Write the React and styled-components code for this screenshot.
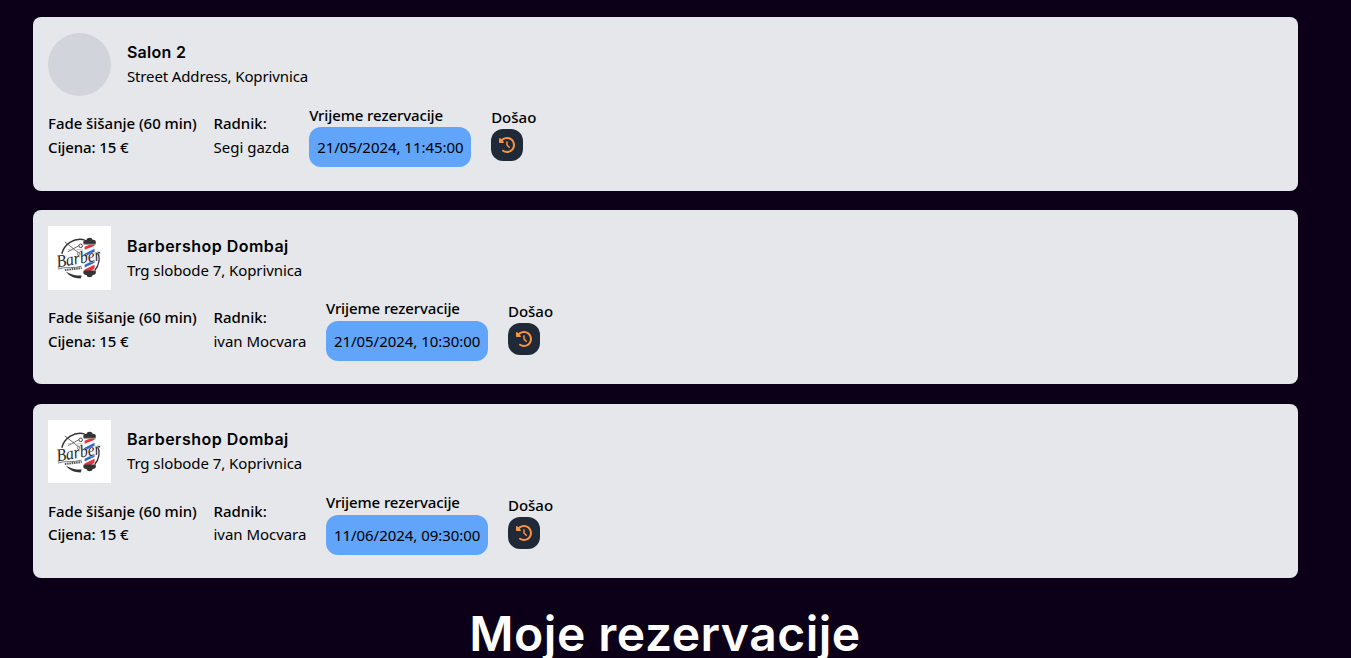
import React from 'react';
import styled, { createGlobalStyle } from 'styled-components';
import { FaClockRotateLeft } from 'react-icons/fa6';

const GlobalStyle = createGlobalStyle`
  *, *::before, *::after { box-sizing: border-box; }
  body {
    margin: 0;
    background: #0c0019;
    color: #000;
    font-family: 'Noto Sans', 'Open Sans', sans-serif;
    font-size: 15px;
    line-height: 23.8px;
  }
`;

const Page = styled.main`
  height: 100vh;
  overflow: hidden;
  padding: 16.5px 53.5px 0 32.5px;
`;

const List = styled.section`
  display: flex;
  flex-direction: column;
  gap: 19.8px;
`;

const Card = styled.article`
  height: 174px;
  padding: 16px 15.5px;
  border-radius: 8px;
  background: #e5e7eb;
`;

const CardHeader = styled.header`
  display: flex;
  align-items: center;
  gap: 15.5px;
  height: 63.4px;
`;

const EmptyAvatar = styled.div`
  width: 63.4px;
  height: 63.4px;
  border-radius: 50%;
  background: #d1d5db;
`;

const LogoFrame = styled.svg`
  display: block;
  width: 63.4px;
  height: 63.4px;
  background: #fff;
`;

const SalonInfo = styled.div`
  display: flex;
  flex-direction: column;
`;

const SalonName = styled.h2`
  margin: 0;
  font: 600 16px/24px Inter, sans-serif;
  letter-spacing: ${(p) => p.$tracking}px;
  white-space: nowrap;
`;

const Address = styled.span`
  margin-top: 1px;
  letter-spacing: ${(p) => p.$tracking}px;
  white-space: nowrap;
`;

const Text = styled.span`
  display: block;
  white-space: nowrap;
  font-weight: ${(p) => (p.$strong ? 550 : 400)};
  letter-spacing: ${(p) => p.$tracking || 0}px;
`;

const Details = styled.div`
  display: flex;
  align-items: center;
  height: 63.4px;
  margin-top: 7.8px;
`;

const Service = styled.div`
  width: 165.5px;
  padding-top: 1px;
`;

const Worker = styled.div`
  margin-right: 19.6px;
  padding-top: 1px;
`;

const Booking = styled.div`
  width: 162px;
  margin-right: 20px;
`;

const TimePill = styled.div`
  height: 39.6px;
  padding: 8.6px 8px 0;
  border-radius: 12px;
  background: #60a5fa;
  white-space: nowrap;
  letter-spacing: -0.04px;
`;

const Arrival = styled.div`
  padding-bottom: 4px;
`;

const ArrivalLabel = styled(Text)`
  height: 23.8px;
  line-height: 25.6px;
`;

const StatusButton = styled.button`
  display: flex;
  align-items: center;
  justify-content: center;
  width: 32px;
  height: 32px;
  padding: 0;
  border: 0;
  border-radius: 12px;
  background: #1f2937;
  color: #fb923c;
  font-size: 16px;
`;

const Title = styled.h1`
  margin: 20px 0 0;
  text-align: center;
  color: #fff;
  font: 600 48px/72px Inter, sans-serif;
  letter-spacing: 0.5px;
  white-space: nowrap;
`;

function BarberLogo() {
  return (
    <LogoFrame viewBox="0 0 64 64" aria-label="Barber">
      <path d="M14 28A19 19 0 0 1 37 14M50 26A18 18 0 0 1 47 45" fill="none" stroke="#333" strokeWidth="1.5" />
      <path d="M17 16L32 28M20 26L31 20" stroke="#555" strokeWidth="0.9" />
      <circle cx="33" cy="20" r="1.8" fill="none" stroke="#444" />
      <circle cx="31" cy="28" r="1.5" fill="none" stroke="#777" strokeWidth="0.8" />
      <path d="M20 24h7M29 24h6" stroke="#aaa" strokeWidth="0.8" />
      <rect x="37" y="16" width="10" height="31" fill="#f7f7fa" />
      <path d="M37 21l10-4v3l-10 4zM37 44l10-5v4l-6 4h-4z" fill="#e8323d" />
      <path d="M37 28l10-5v3l-10 5zM37 39l10-5v3l-10 5z" fill="#3169c9" />
      <path d="M36 18.500c-1-3 0-4.500 3-4.500 0-3 6-3 6 0 3 0 4 1.500 3 4.500z" fill="#333" />
      <path d="M36 18.500h12" stroke="#999" />
      <path d="M36 45h12c1 3 0 4.500-3 4.500 0 3-6 3-6 0-3 0-4-1.500-3-4.500z" fill="#333" />
      <text
        x="9.500"
        y="42"
        transform="rotate(-10 9.500 42)"
        textLength="45"
        lengthAdjust="spacingAndGlyphs"
        fontFamily="Liberation Serif, serif"
        fontSize="18"
        fontStyle="italic"
        fill="#292929"
        stroke="#fff"
        strokeWidth="0.6"
        paintOrder="stroke"
      >
        Barber
      </text>
      <path d="M10 43.500c8-3 15 0 24-3" fill="none" stroke="#555" strokeWidth="0.8" />
      <path d="M17 44.500l17-2" stroke="#555" strokeWidth="2" strokeDasharray="1.600 0.700" />
      <path d="M18 46c4 2 8 4.500 16 4l-1 3c-7 0-11-2-15-7z" fill="#333" />
    </LogoFrame>
  );
}

const reservations = [
  { salon: 'Salon 2', nameTracking: 0.3, address: 'Street Address, Koprivnica', addressTracking: -0.13, worker: 'Segi gazda', time: '21/05/2024, 11:45:00' },
  { salon: 'Barbershop Dombaj', nameTracking: 0.48, address: 'Trg slobode 7, Koprivnica', addressTracking: -0.08, worker: 'ivan Mocvara', time: '21/05/2024, 10:30:00', logo: true },
  { salon: 'Barbershop Dombaj', nameTracking: 0.48, address: 'Trg slobode 7, Koprivnica', addressTracking: -0.08, worker: 'ivan Mocvara', time: '11/06/2024, 09:30:00', logo: true },
];

function Reservation({ item }) {
  return (
    <Card>
      <CardHeader>
        {item.logo ? <BarberLogo /> : <EmptyAvatar />}
        <SalonInfo>
          <SalonName $tracking={item.nameTracking}>{item.salon}</SalonName>
          <Address $tracking={item.addressTracking}>{item.address}</Address>
        </SalonInfo>
      </CardHeader>
      <Details>
        <Service>
          <Text $strong $tracking={-0.04}>Fade šišanje (60 min)</Text>
          <Text $strong $tracking={-0.12}>Cijena: 15 €</Text>
        </Service>
        <Worker>
          <Text $strong>Radnik:</Text>
          <Text $tracking={item.logo ? -0.04 : 0}>{item.worker}</Text>
        </Worker>
        <Booking>
          <Text $strong $tracking={-0.11}>Vrijeme rezervacije</Text>
          <TimePill>{item.time}</TimePill>
        </Booking>
        <Arrival>
          <ArrivalLabel $strong>Došao</ArrivalLabel>
          <StatusButton aria-label="Došao">
            <FaClockRotateLeft />
          </StatusButton>
        </Arrival>
      </Details>
    </Card>
  );
}

export default function App() {
  return (
    <>
      <GlobalStyle />
      <Page>
        <List>
          {reservations.map((item) => (
            <Reservation key={item.time} item={item} />
          ))}
        </List>
        <Title>Moje rezervacije</Title>
      </Page>
    </>
  );
}
